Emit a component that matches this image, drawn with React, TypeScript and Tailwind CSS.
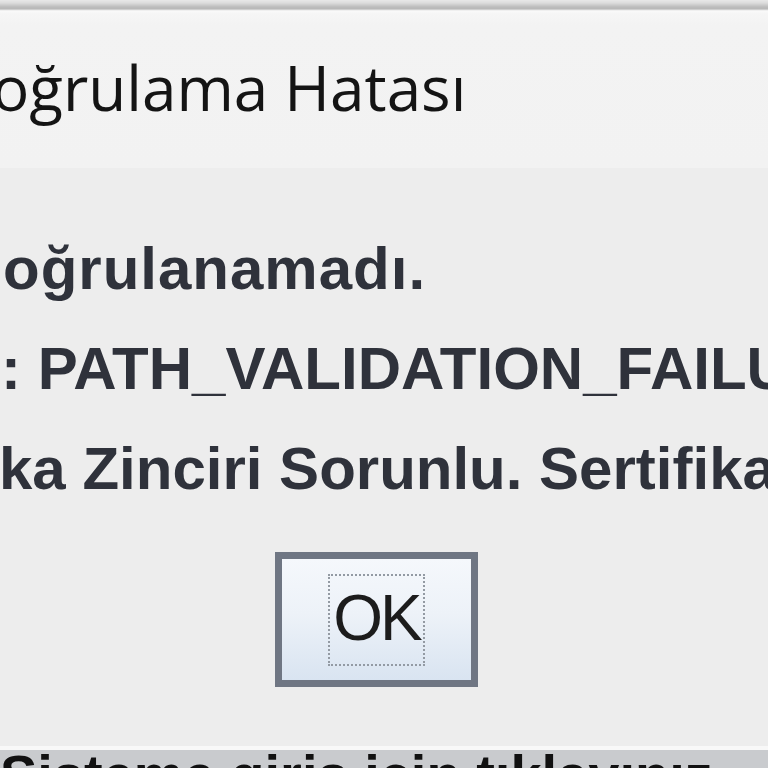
import React from "react";

export default function App() {
  return (
    <div className="w-[768px] h-[768px] overflow-hidden flex flex-col bg-[#ededed]">
      {/* top window edge */}
      <div className="h-[13px] shrink-0 bg-[linear-gradient(to_bottom,#e8e8e8_0px,#dcdcdc_3px,#bcbcbc_7px,#b8b8b8_9px,#e4e4e4_10px,#fafafa_11px,#f7f7f7_13px)]" />
      {/* title area */}
      <div className="h-[155px] shrink-0 bg-[linear-gradient(to_bottom,#f6f6f6_0px,#f3f3f3_12px,#f2f2f2_100%)] overflow-hidden pt-[43px]">
        <div
          className="whitespace-nowrap text-[62px] leading-none text-[#141414] -ml-[53px]"
          style={{ fontFamily: '"Open Sans", "Noto Sans", sans-serif' }}
        >
          Doğrulama Hatası
        </div>
      </div>
      {/* content */}
      <div className="h-[578px] shrink-0 bg-[#ededed] flex flex-col pt-[51px] overflow-hidden">
        <div
          className="flex flex-col font-bold text-[60px] leading-[100px] text-[#2f323b] whitespace-nowrap"
          style={{ fontFamily: '"Liberation Sans", Arial, sans-serif' }}
        >
          <div className="pl-[3px] tracking-[1px]">oğrulanamadı.</div>
          <div className="pl-[1px]">: PATH_VALIDATION_FAILURE</div>
          <div className="-ml-[1px]">ka Zinciri Sorunlu. Sertifika</div>
        </div>
        <div className="mt-[33px] pl-[275px] flex">
          <div className="w-[203px] h-[135px] border-[7px] border-[#6f7683] bg-[linear-gradient(to_bottom,#f5f8fc_0%,#edf2f8_45%,#d9e4f1_100%)] flex items-center justify-center">
            <div
              className="w-[97px] h-[92px] border-2 border-dotted border-[#939aa3] flex items-start justify-center pt-[10px] text-[64px] leading-none text-[#1c1c1c] tracking-[-3px]"
              style={{ fontFamily: '"Liberation Sans", Arial, sans-serif' }}
            >
              OK
            </div>
          </div>
        </div>
      </div>
      {/* bottom edge */}
      <div className="h-[4px] shrink-0 bg-[#f8f8f8]" />
      <div className="h-[18px] shrink-0 bg-[#c9cbce] overflow-hidden">
        <div
          className="-mt-[3px] whitespace-nowrap font-bold text-[56px] leading-none text-[#111111]"
          style={{ fontFamily: '"Liberation Sans", Arial, sans-serif' }}
        >
          Sisteme giriş için tıklayınız
        </div>
      </div>
    </div>
  );
}
